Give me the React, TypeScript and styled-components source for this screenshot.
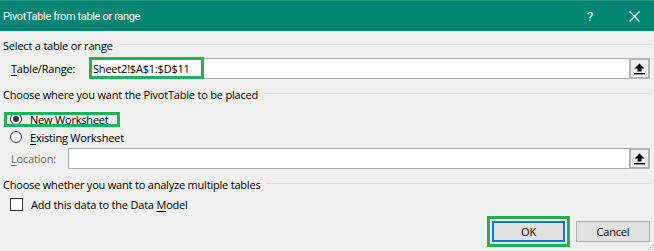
import React from 'react';
import styled, { createGlobalStyle } from 'styled-components';

const GlobalStyle = createGlobalStyle`
  html, body { margin: 0; padding: 0; background: #f0f0f0; }
  body { font-family: "Open Sans", "Noto Sans", sans-serif; font-size: 11px; letter-spacing: -0.2px; color: #000; }
  #root { width: 654px; height: 251px; }
  * { box-sizing: border-box; }
`;

const Dialog = styled.div`
  position: relative;
  width: 654px;
  height: 251px;
  display: flex;
  flex-direction: column;
  background: #f0f0f0;
  overflow: hidden;
`;

const TitleBar = styled.div`
  flex: none;
  height: 31px;
  display: flex;
  align-items: center;
  padding-left: 3px;
  background: #028572;
  border-top: 1px solid #2a9686;
  color: #fff;
`;

const Title = styled.div`
  flex: 1;
  font-family: Roboto, "Open Sans", sans-serif;
  font-size: 11px;
  letter-spacing: -0.35px;
`;

const TitleButton = styled.div<{ $gap?: number }>`
  width: 20px;
  height: 20px;
  display: flex;
  align-items: center;
  justify-content: center;
  margin-right: ${(p) => p.$gap ?? 0}px;
  font-family: Roboto, "Open Sans", sans-serif;
  font-size: 13px;
`;

const Body = styled.div`
  flex: 1;
  display: flex;
  flex-direction: column;
  padding: 0 4px 0 3px;
`;

const SectionHeader = styled.div<{ $top: number }>`
  display: flex;
  align-items: center;
  height: 16px;
  margin-top: ${(p) => p.$top}px;
  white-space: nowrap;
  &::after {
    content: '';
    flex: 1;
    height: 1px;
    margin-left: 6px;
    margin-top: -1px;
    background: #d9d9d9;
  }
`;

const FieldRow = styled.div<{ $top: number }>`
  display: flex;
  align-items: center;
  height: 21px;
  margin-top: ${(p) => p.$top}px;
  padding-left: 8px;
`;

const FieldLabel = styled.div<{ $width: number; $disabled?: boolean }>`
  flex: none;
  width: ${(p) => p.$width}px;
  color: ${(p) => (p.$disabled ? '#6d6d6d' : '#000')};
`;

const InputBox = styled.div`
  position: relative;
  flex: 1;
  height: 21px;
  display: flex;
  align-items: center;
  background: #fff;
  border: 1px solid #ababab;
`;

const InputText = styled.div`
  flex: 1;
  padding-left: 3px;
  white-space: nowrap;
`;

const PickButton = styled.div`
  flex: none;
  width: 21px;
  height: 21px;
  margin: -1px -1px -1px 0;
  display: flex;
  align-items: center;
  justify-content: center;
  background: #f0f0f0;
  border: 2px solid #b4b4b4;
`;

const Mark = styled.div<{ $top: number; $left: number; $width: number; $height: number }>`
  position: absolute;
  top: ${(p) => p.$top}px;
  left: ${(p) => p.$left}px;
  width: ${(p) => p.$width}px;
  height: ${(p) => p.$height}px;
  border: 3px solid #22b05c;
  pointer-events: none;
`;

const OptionRow = styled.div<{ $top?: number }>`
  display: flex;
  align-items: stretch;
  height: 18px;
  margin-top: ${(p) => p.$top ?? 0}px;
  padding-left: 7px;
`;

const OptionItem = styled.div`
  position: relative;
  display: flex;
  align-items: center;
  gap: 8px;
`;

const Radio = styled.span<{ $checked?: boolean }>`
  flex: none;
  width: 12px;
  height: 12px;
  border-radius: 50%;
  border: 1px solid #333;
  background: #fff;
  display: flex;
  align-items: center;
  justify-content: center;
  &::after {
    content: '';
    display: ${(p) => (p.$checked ? 'block' : 'none')};
    width: 6px;
    height: 6px;
    border-radius: 50%;
    background: #333;
  }
`;

const CheckBox = styled.span`
  flex: none;
  width: 13px;
  height: 13px;
  border: 1px solid #333;
  background: #fff;
`;

const Key = styled.span`
  text-decoration: underline;
  text-underline-offset: 2px;
`;

const Footer = styled.div`
  margin-top: auto;
  display: flex;
  justify-content: flex-end;
  align-items: center;
  gap: 6px;
  padding-bottom: 4px;
`;

const ButtonMark = styled.div`
  border: 3px solid #22b05c;
  padding: 2px;
`;

const Button = styled.div<{ $default?: boolean }>`
  width: ${(p) => (p.$default ? 73 : 74)}px;
  height: 21px;
  display: flex;
  align-items: center;
  justify-content: center;
  background: #e1e1e1;
  border: ${(p) => (p.$default ? '2px solid #0078d7' : '1px solid #adadad')};
`;

const Grip = styled.svg`
  position: absolute;
  right: 0;
  bottom: 0;
`;

const PickIcon = () => (
  <svg width="11" height="12" viewBox="0 0 11 12">
    <path d="M5.5 0.5 L0.5 5.5 L3.5 5.5 L3.5 8.5 L7.5 8.5 L7.5 5.5 L10.5 5.5 Z" fill="#000" />
    <rect x="0" y="10" width="11" height="1.4" fill="#000" />
  </svg>
);

const CloseIcon = () => (
  <svg width="11" height="11" viewBox="0 0 11 11">
    <path d="M0.5 0.5 L10.5 10.5 M10.5 0.5 L0.5 10.5" stroke="#fff" strokeWidth="1.1" />
  </svg>
);

export default function App() {
  return (
    <>
      <GlobalStyle />
      <Dialog>
        <TitleBar>
          <Title>PivotTable from table or range</Title>
          <TitleButton $gap={24}>?</TitleButton>
          <TitleButton $gap={10}>
            <CloseIcon />
          </TitleButton>
        </TitleBar>
        <Body>
          <SectionHeader $top={6}>Select a table or range</SectionHeader>
          <FieldRow $top={5}>
            <FieldLabel $width={78}>
              <Key>T</Key>able/Range:
            </FieldLabel>
            <InputBox>
              <InputText>Sheet2!$A$1:$D$11</InputText>
              <PickButton>
                <PickIcon />
              </PickButton>
              <Mark $top={-2} $left={-1} $width={115} $height={22} />
            </InputBox>
          </FieldRow>
          <SectionHeader $top={7}>Choose where you want the PivotTable to be placed</SectionHeader>
          <OptionRow $top={8}>
            <OptionItem>
              <Radio $checked />
              <span>
                <Key>N</Key>ew Worksheet
              </span>
              <Mark $top={2} $left={-6} $width={116} $height={15} />
            </OptionItem>
          </OptionRow>
          <OptionRow>
            <OptionItem>
              <Radio />
              <span>
                <Key>E</Key>xisting Worksheet
              </span>
            </OptionItem>
          </OptionRow>
          <FieldRow $top={2}>
            <FieldLabel $width={57} $disabled>
              <Key>L</Key>ocation:
            </FieldLabel>
            <InputBox>
              <InputText />
              <PickButton>
                <PickIcon />
              </PickButton>
            </InputBox>
          </FieldRow>
          <SectionHeader $top={7}>Choose whether you want to analyze multiple tables</SectionHeader>
          <OptionRow $top={3}>
            <OptionItem>
              <CheckBox />
              <span>
                Add this data to the Data <Key>M</Key>odel
              </span>
            </OptionItem>
          </OptionRow>
          <Footer>
            <ButtonMark>
              <Button $default>OK</Button>
            </ButtonMark>
            <Button>Cancel</Button>
          </Footer>
        </Body>
        <Grip width="7" height="7" viewBox="0 0 7 7">
          <rect x="5" y="1" width="1" height="1" fill="#b0b0b0" />
          <rect x="3" y="3" width="1" height="1" fill="#b0b0b0" />
          <rect x="5" y="3" width="1" height="1" fill="#b0b0b0" />
          <rect x="1" y="5" width="1" height="1" fill="#b0b0b0" />
          <rect x="3" y="5" width="1" height="1" fill="#b0b0b0" />
          <rect x="5" y="5" width="1" height="1" fill="#b0b0b0" />
        </Grip>
      </Dialog>
    </>
  );
}
